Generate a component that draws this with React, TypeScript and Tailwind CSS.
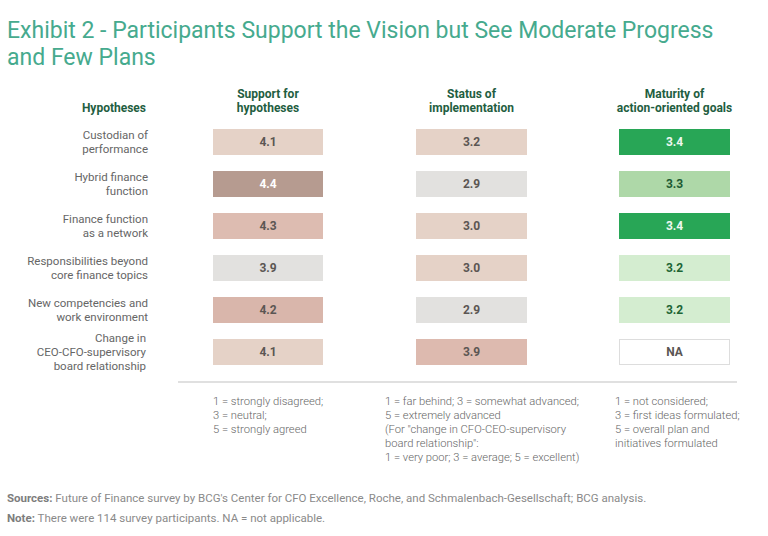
import React from "react";

type Cell = { v: string; bg: string; fg: string; border?: boolean };

const rows: { label: string[]; cells: Cell[] }[] = [
  {
    label: ["Custodian of", "performance"],
    cells: [
      { v: "4.1", bg: "bg-[#e5d2c7]", fg: "text-[#5b5653]" },
      { v: "3.2", bg: "bg-[#e5d2c7]", fg: "text-[#5b5653]" },
      { v: "3.4", bg: "bg-[#28a656]", fg: "text-[#eef8f0]" },
    ],
  },
  {
    label: ["Hybrid finance", "function"],
    cells: [
      { v: "4.4", bg: "bg-[#b69b90]", fg: "text-white" },
      { v: "2.9", bg: "bg-[#e2e1df]", fg: "text-[#5b5653]" },
      { v: "3.3", bg: "bg-[#aed8a8]", fg: "text-[#1d5a33]" },
    ],
  },
  {
    label: ["Finance function", "as a network"],
    cells: [
      { v: "4.3", bg: "bg-[#ddbcb1]", fg: "text-[#5b5653]" },
      { v: "3.0", bg: "bg-[#e5d2c7]", fg: "text-[#5b5653]" },
      { v: "3.4", bg: "bg-[#28a656]", fg: "text-[#eef8f0]" },
    ],
  },
  {
    label: ["Responsibilities beyond", "core finance topics"],
    cells: [
      { v: "3.9", bg: "bg-[#e2e1df]", fg: "text-[#5b5653]" },
      { v: "3.0", bg: "bg-[#e5d2c7]", fg: "text-[#5b5653]" },
      { v: "3.2", bg: "bg-[#d4edd0]", fg: "text-[#1d6535]" },
    ],
  },
  {
    label: ["New competencies and", "work environment"],
    cells: [
      { v: "4.2", bg: "bg-[#d9b6ab]", fg: "text-[#5b5653]" },
      { v: "2.9", bg: "bg-[#e2e1df]", fg: "text-[#5b5653]" },
      { v: "3.2", bg: "bg-[#d4edd0]", fg: "text-[#1d6535]" },
    ],
  },
  {
    label: ["Change in", "CEO-CFO-supervisory", "board relationship"],
    cells: [
      { v: "4.1", bg: "bg-[#e5d2c7]", fg: "text-[#5b5653]" },
      { v: "3.9", bg: "bg-[#ddbaaf]", fg: "text-[#5b5653]" },
      { v: "NA", bg: "bg-white", fg: "text-[#5b5653]", border: true },
    ],
  },
];

const margins = ["ml-[64px] w-[110px]", "ml-[93px] w-[111px]", "ml-[92px] w-[111px]"];

const headers = [
  ["Support for", "hypotheses"],
  ["Status of", "implementation"],
  ["Maturity of", "action-oriented goals"],
];

export default function App() {
  return (
    <div className="w-[768px] h-[536px] bg-white overflow-hidden relative" style={{ fontFamily: "Roboto, 'Open Sans', sans-serif" }}>
      <h1 className="pl-[7px] pt-[17px] text-[23px] leading-[27px] text-[#46aa8e] font-normal whitespace-nowrap">
        Exhibit 2 - Participants Support the Vision but See Moderate Progress
        <br />
        and Few Plans
      </h1>

      {/* header row */}
      <div className="flex items-end mt-[16px] text-[12px] leading-[14px] font-bold text-[#1f5e41]">
        <div className="w-[149px] pr-[3px] text-right">Hypotheses</div>
        {headers.map((h, i) => (
          <div key={i} className={`${margins[i]} flex flex-col items-center whitespace-nowrap text-center`}>
            <div>{h[0]}</div>
            <div>{h[1]}</div>
          </div>
        ))}
      </div>

      {/* data rows */}
      <div className="flex flex-col mt-[6px]">
        {rows.map((r, ri) => (
          <div key={ri} className="flex items-center h-[42px]">
            <div className="w-[149px] pr-[1px] text-right text-[11.5px] leading-[14px] text-[#666666] whitespace-nowrap">
              {r.label.map((l, li) => (
                <div key={li} className={r.label.length === 3 ? "pr-[2px]" : ""}>
                  {l}
                </div>
              ))}
            </div>
            {r.cells.map((c, ci) => (
              <div
                key={ci}
                className={`${margins[ci]} h-[26px] flex items-center justify-center text-[12px] font-bold ${c.bg} ${c.fg} ${
                  c.border ? "border border-[#dddddd]" : ""
                }`}
              >
                {c.v}
              </div>
            ))}
          </div>
        ))}
      </div>

      {/* divider */}
      <div className="ml-[178px] w-[559px] h-[2px] bg-[#e0e0e0] mt-[8px]" />

      {/* legend */}
      <div className="flex mt-[12px] text-[11.2px] leading-[14px] font-light text-[#666666] whitespace-nowrap">
        <div className="ml-[213px] w-[172px]">
          <div>1 = strongly disagreed;</div>
          <div>3 = neutral;</div>
          <div>5 = strongly agreed</div>
        </div>
        <div className="w-[230px]">
          <div>1 = far behind; 3 = somewhat advanced;</div>
          <div>5 = extremely advanced</div>
          <div>(For "change in CFO-CEO-supervisory</div>
          <div>board relationship":</div>
          <div>1 = very poor; 3 = average; 5 = excellent)</div>
        </div>
        <div>
          <div>1 = not considered;</div>
          <div>3 = first ideas formulated;</div>
          <div>5 = overall plan and</div>
          <div>initiatives formulated</div>
        </div>
      </div>

      {/* sources */}
      <div className="pl-[7px] mt-[23px] text-[11.5px] text-[#8a8a8a] leading-[20px] whitespace-nowrap">
        <div>
          <span className="font-bold text-[#7d7d7d]">Sources:</span> Future of Finance survey by BCG's Center for CFO Excellence,
          Roche, and Schmalenbach-Gesellschaft; BCG analysis.
        </div>
        <div>
          <span className="font-bold text-[#7d7d7d]">Note:</span> There were 114 survey participants. NA = not applicable.
        </div>
      </div>
    </div>
  );
}
